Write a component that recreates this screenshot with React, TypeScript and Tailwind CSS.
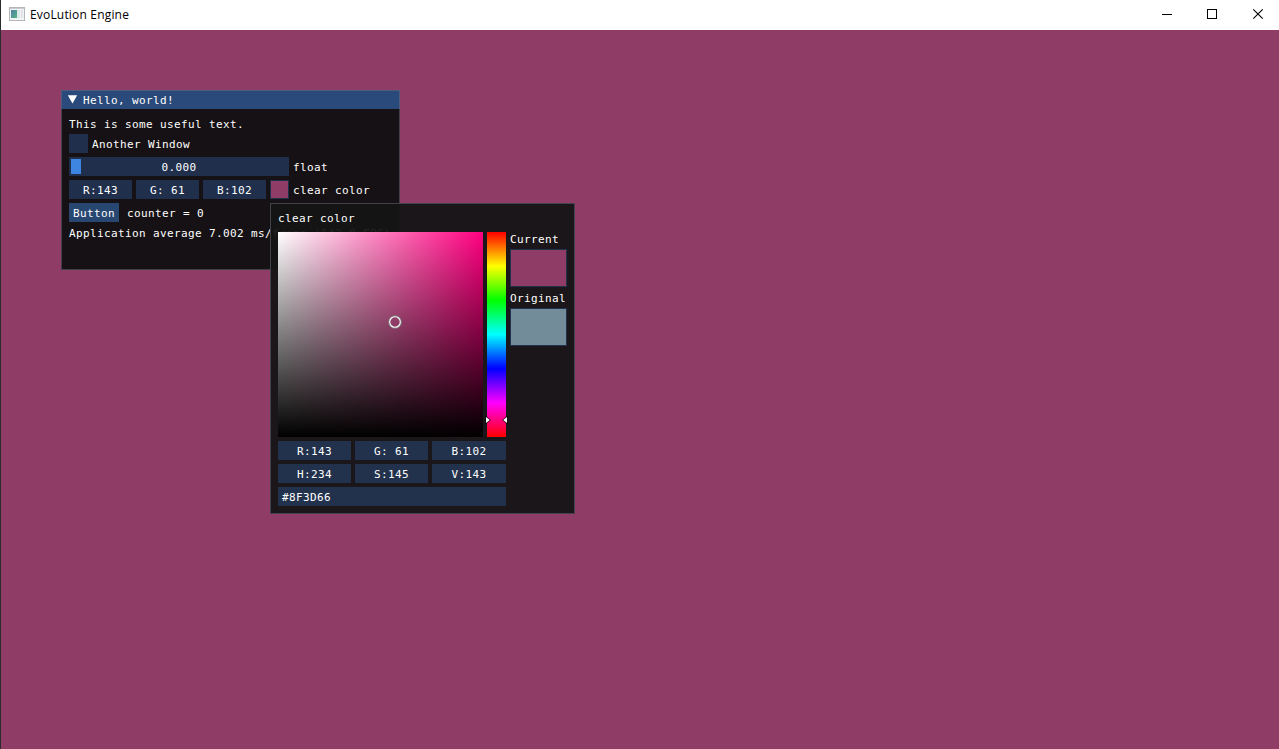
import type { ReactNode } from "react";

function Label({ children }: { children: ReactNode }) {
  return <span className="block h-[13px] whitespace-pre leading-[15px]">{children}</span>;
}

function Field({ children, className = "" }: { children: ReactNode; className?: string }) {
  return (
    <div className={`flex h-[19px] items-center justify-center bg-[#294a7a]/54 ${className}`}>
      <Label>{children}</Label>
    </div>
  );
}

function TitleBar() {
  return (
    <header className="flex h-[30px] shrink-0 items-center bg-white text-black">
      <svg className="mb-[2px] ml-[8px] shrink-0" width="16" height="14" viewBox="0 0 16 14" shapeRendering="crispEdges">
        <defs>
          <linearGradient id="appIcon" x1="0" y1="0" x2="1" y2="1">
            <stop offset="0" stopColor="#4f7fa8" />
            <stop offset="1" stopColor="#57b582" />
          </linearGradient>
        </defs>
        <rect x="0.5" y="0.5" width="15" height="13" fill="#f2f3f4" stroke="#b4b6ba" />
        <rect x="1" y="1" width="14" height="1" fill="#c9cbd0" />
        <rect x="2" y="3" width="6" height="8" fill="url(#appIcon)" />
        <rect x="8" y="3" width="3" height="8" fill="#dce9e8" />
        <rect x="12" y="3" width="2" height="8" fill="#dfe3e6" />
      </svg>
      <h1 className="ml-[5px] flex-1 whitespace-nowrap font-['Open_Sans',sans-serif] text-[12px] leading-[16px] tracking-[0.18px]">
        EvoLution Engine
      </h1>
      <svg className="shrink-0" width="137" height="30" viewBox="0 0 137 30" fill="none" stroke="#000">
        <path d="M20 14.5H30M65.5 9.5H74.5V18.5H65.5Z" shapeRendering="crispEdges" />
        <path d="M111.3 9.3L120.7 18.7M120.7 9.3L111.3 18.7" strokeWidth="1.1" />
      </svg>
    </header>
  );
}

function HelloWindow() {
  return (
    <section className="absolute left-[60px] top-[60px] h-[180px] w-[339px] overflow-hidden bg-[#0f0f0f]/94">
      <div className="flex h-[19px] items-center gap-[5px] bg-[#294a7a]">
        <svg className="ml-[6px]" width="11" height="11" viewBox="0 0 11 11">
          <path d="M0.8 1.2H10.2L5.5 9.6Z" fill="#fff" />
        </svg>
        <Label>Hello, world!</Label>
      </div>
      <div className="flex flex-col gap-[4px] px-[8px] pt-[8px]">
        <Label>This is some useful text.</Label>
        <div className="flex items-center gap-[4px]">
          <div className="size-[19px] bg-[#294a7a]/54" />
          <Label>Another Window</Label>
        </div>
        <div className="flex items-center gap-[4px]">
          <div className="relative flex h-[19px] w-[220px] items-center justify-center bg-[#294a7a]/54">
            <div className="absolute left-[2px] top-[2px] h-[15px] w-[10px] bg-[#3d85e0]" />
            <Label>0.000</Label>
          </div>
          <Label>float</Label>
        </div>
        <div className="flex items-center gap-[4px]">
          <Field className="w-[63px]">R:143</Field>
          <Field className="w-[63px]">G: 61</Field>
          <Field className="w-[63px]">B:102</Field>
          <div className="size-[19px] border border-[#1f304d] bg-[#8f3d66]" />
          <Label>clear color</Label>
        </div>
        <div className="flex items-center gap-[8px]">
          <button className="flex h-[19px] w-[50px] items-center justify-center bg-[#4296fa]/40">
            <Label>Button</Label>
          </button>
          <Label>counter = 0</Label>
        </div>
        <Label>Application average 7.002 ms/frame (142.8 FPS)</Label>
      </div>
      <div className="pointer-events-none absolute inset-0 border border-[#6e6e80]/50" />
    </section>
  );
}

function ColorPicker() {
  return (
    <section className="absolute left-[269px] top-[173px] h-[311px] w-[305px] bg-[#141414]/94 px-[8px] pt-[8px]">
      <Label>clear color</Label>
      <div className="mt-[8px] flex gap-[4px]">
        <div className="relative size-[205px] bg-[linear-gradient(to_bottom,rgba(0,0,0,0),#000),linear-gradient(to_right,#fff,#ff0080)]">
          <svg className="absolute left-[109px] top-[82px]" width="16" height="16" viewBox="0 0 16 16" fill="none">
            <circle cx="8" cy="8" r="6" stroke="#808080" strokeWidth="1.6" />
            <circle cx="8" cy="8" r="5.3" stroke="#fff" strokeWidth="1.1" />
          </svg>
        </div>
        <div className="relative h-[205px] w-[19px] bg-[linear-gradient(to_bottom,#f00,#ff0,#0f0,#0ff,#00f,#f0f,#f00)]">
          <svg className="absolute left-[-2px] top-[183px]" width="23" height="10" viewBox="0 0 23 10">
            <path d="M0.5 0.5V9.5L6 5ZM22.5 0.5V9.5L17 5Z" fill="#000" fillOpacity="0.75" />
            <path d="M1 2V8L4.8 5ZM22 2V8L18.2 5Z" fill="#fff" />
          </svg>
        </div>
        <div className="flex w-[57px] flex-col gap-[4px]">
          <Label>Current</Label>
          <div className="h-[38px] border border-[#22324e] bg-[#8f3d66]" />
          <Label>Original</Label>
          <div className="h-[38px] border border-[#22324e] bg-[#738c99]" />
        </div>
      </div>
      <div className="mt-[4px] grid w-[228px] grid-cols-[73px_73px_74px] gap-[4px]">
        <Field>R:143</Field>
        <Field>G: 61</Field>
        <Field>B:102</Field>
        <Field>H:234</Field>
        <Field>S:145</Field>
        <Field>V:143</Field>
        <div className="col-span-3 flex h-[19px] items-center bg-[#294a7a]/54 px-[4px]">
          <Label>#8F3D66</Label>
        </div>
      </div>
      <div className="pointer-events-none absolute inset-0 border border-[#6e6e80]/50" />
    </section>
  );
}

export default function App() {
  return (
    <div className="flex h-[749px] w-[1279px] overflow-hidden border-l border-[#2b2b2d]">
      <div className="flex min-w-0 flex-1 flex-col">
        <TitleBar />
        <main className="relative flex-1 bg-[#8f3d66] font-['DejaVu_Sans_Mono',monospace] text-[11px] tracking-[0.378px] text-white">
          <HelloWindow />
          <ColorPicker />
        </main>
      </div>
    </div>
  );
}
